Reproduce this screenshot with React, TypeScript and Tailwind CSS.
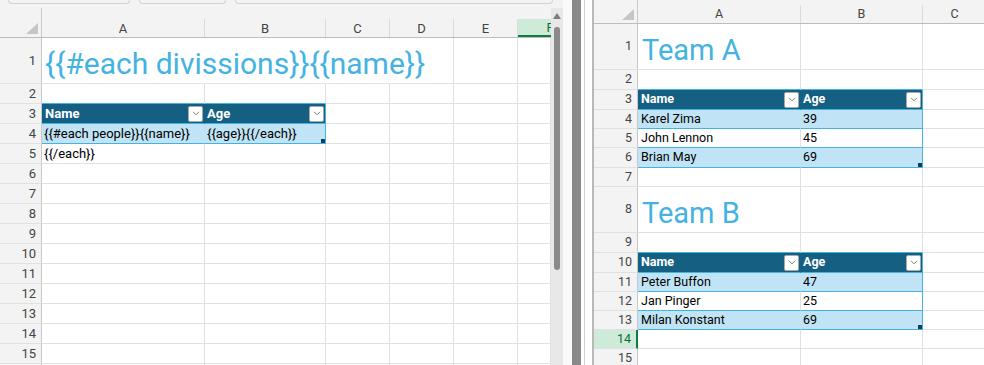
import React from "react";

// Two Excel windows side by side: the template on the left, the rendered result on the right.

type CellProps = {
  w: string;
  r?: string;
  b?: string;
  className?: string;
  children?: React.ReactNode;
};

function Cell({ w, r = "border-r-[#e1e1e1]", b = "border-b-[#e1e1e1]", className = "", children }: CellProps) {
  return (
    <div className={`${w} ${r} ${b} shrink-0 border-r border-b flex items-center whitespace-nowrap ${className}`}>
      {children}
    </div>
  );
}

function RowHead({ n, w, active = false }: { n: number; w: string; active?: boolean }) {
  const look = active
    ? "bg-[#cdebd8] text-[#0e6b38] border-r-2 border-r-[#107c41]"
    : "bg-[#f3f3f3] text-[#444] border-r border-r-[#c8c8c8]";
  return (
    <div className={`${w} ${look} shrink-0 border-b border-b-[#e1e1e1] flex items-center justify-end pr-[5px]`}>
      {n}
    </div>
  );
}

function Filter() {
  return (
    <div className="ml-auto mr-[1px] w-[15px] h-[16px] bg-white border border-[#a9a9a9] rounded-[2px] flex items-center justify-center">
      <svg width="8" height="5" viewBox="0 0 8 5">
        <path d="M1 0.8l3 3 3-3" fill="none" stroke="#7a7a7a" strokeWidth="1" />
      </svg>
    </div>
  );
}

function Corner() {
  return (
    <svg width="12" height="11" viewBox="0 0 12 11" className="absolute right-[3px] bottom-[3px]">
      <polygon points="12,0 12,11 0,11" fill="#c6c6c6" />
    </svg>
  );
}

function Handle() {
  return <div className="absolute right-0 bottom-0 w-[4px] h-[4px] bg-[#123f5e]" />;
}

const L = ["w-[163px]", "w-[121px]", "w-[64px]", "w-[64px]", "w-[64px]", "w-[33px]"];
const R = ["w-[163px]", "w-[122px]", "w-[64px]"];

const BLUE_R = "border-r-[#44b3e1]";
const BLUE_B = "border-b-[#44b3e1]";

function LeftPane() {
  const plain = (from: number) => L.slice(from).map((w, i) => <Cell key={i} w={w} />);

  return (
    <div className="w-[563px] shrink-0 flex flex-col bg-[#f3f3f3]">
      {/* ribbon buttons cut off at the top */}
      <div className="h-[8px] shrink-0 flex gap-[9px] pl-[8px]">
        <div className="w-[122px] h-[4px] border-x border-b border-[#d2d2d2] rounded-b-[4px]" />
        <div className="w-[87px] h-[4px] border-x border-b border-[#d2d2d2] rounded-b-[4px]" />
        <div className="w-[318px] h-[4px] border-x border-b border-[#d2d2d2] rounded-b-[4px]" />
      </div>

      <div className="flex flex-1 min-h-0 overflow-hidden">
        <div className="w-[551px] shrink-0 overflow-hidden bg-white text-[13px] text-black">
          {/* column headers */}
          <div className="flex h-[30px] bg-[#f3f3f3] border-b border-[#bdbdbd] text-[13px] text-[#444]">
            <div className="w-[42px] shrink-0 border-r border-[#c8c8c8] relative">
              <Corner />
            </div>
            {["A", "B", "C", "D", "E"].map((c, i) => (
              <div key={c} className={`${L[i]} shrink-0 mt-[11px] pt-[2px] border-r border-[#dadada] flex items-center justify-center`}>
                {c}
              </div>
            ))}
            <div className="w-[33px] shrink-0 mt-[11px] overflow-hidden bg-[#cdebd8] border-b-2 border-[#107c41] text-[#0e6b38]">
              <div className="w-[64px] h-full pt-[2px] flex items-center justify-center">F</div>
            </div>
          </div>

          {/* row 1 with the overflowing title */}
          <div className="flex h-[46px]">
            <RowHead n={1} w="w-[42px]" />
            <Cell w={L[0]} r="border-r-transparent" className="items-end pl-[3px] pb-[4px] relative z-10">
              <span className="text-[30px] leading-none text-[#44b3e1]">{"{{#each divissions}}{{name}}"}</span>
            </Cell>
            <Cell w={L[1]} r="border-r-transparent" />
            <Cell w={L[2]} r="border-r-transparent" />
            {plain(3)}
          </div>

          <div className="flex h-[20px]">
            <RowHead n={2} w="w-[42px]" />
            <Cell w={L[0]} b={BLUE_B} />
            <Cell w={L[1]} b={BLUE_B} />
            {plain(2)}
          </div>

          <div className="flex h-[20px]">
            <RowHead n={3} w="w-[42px]" />
            <Cell w={L[0]} r="border-r-[#156082]" b={BLUE_B} className="bg-[#156082] text-white font-bold pl-[3px]">
              Name
              <Filter />
            </Cell>
            <Cell w={L[1]} r={BLUE_R} b={BLUE_B} className="bg-[#156082] text-white font-bold pl-[2px]">
              Age
              <Filter />
            </Cell>
            {plain(2)}
          </div>

          <div className="flex h-[20px]">
            <RowHead n={4} w="w-[42px]" />
            <Cell w={L[0]} r="border-r-[#c0e4f5]" b={BLUE_B} className="bg-[#c0e4f5] pl-[2px]">
              {"{{#each people}}{{name}}"}
            </Cell>
            <Cell w={L[1]} r={BLUE_R} b={BLUE_B} className="bg-[#c0e4f5] pl-[2px] relative">
              {"{{age}}{{/each}}"}
              <Handle />
            </Cell>
            {plain(2)}
          </div>

          <div className="flex h-[20px]">
            <RowHead n={5} w="w-[42px]" />
            <Cell w={L[0]} className="pl-[2px]">
              {"{{/each}}"}
            </Cell>
            {plain(1)}
          </div>

          {[6, 7, 8, 9, 10, 11, 12, 13, 14, 15, 16].map((n) => (
            <div key={n} className="flex h-[20px]">
              <RowHead n={n} w="w-[42px]" />
              {plain(0)}
            </div>
          ))}
        </div>

        {/* vertical scrollbar */}
        <div className="w-[12px] shrink-0 bg-[#e8e8e8] flex flex-col items-center">
          <svg width="8" height="6" viewBox="0 0 8 6" className="mt-[5px] shrink-0">
            <polygon points="4,0 8,6 0,6" fill="#7d7d7d" />
          </svg>
          <div className="mt-[8px] w-[6px] h-[243px] shrink-0 rounded-full bg-[#8a8a8a]" />
        </div>
      </div>
    </div>
  );
}

type Person = { name: string; age: number };

function TeamRows({ start, people }: { start: number; people: Person[] }) {
  const heights = ["h-[19px]", "h-[19px]", "h-[20px]"];
  return (
    <>
      <div className="flex h-[20px]">
        <RowHead n={start} w="w-[44px]" />
        <Cell w={R[0]} r="border-r-[#156082]" b={BLUE_B} className="bg-[#156082] text-white font-bold pl-[3px]">
          Name
          <Filter />
        </Cell>
        <Cell w={R[1]} r={BLUE_R} b={BLUE_B} className="bg-[#156082] text-white font-bold pl-[2px]">
          Age
          <Filter />
        </Cell>
        <Cell w={R[2]} />
      </div>
      {people.map((p, i) => {
        const band = i % 2 === 0;
        const last = i === people.length - 1;
        return (
          <div key={p.name} className={`flex ${start === 3 ? heights[i] : "h-[19px]"}`}>
            <RowHead n={start + 1 + i} w="w-[44px]" />
            <Cell
              w={R[0]}
              r={band ? "border-r-[#c0e4f5]" : "border-r-[#e1e1e1]"}
              b={BLUE_B}
              className={`${band ? "bg-[#c0e4f5]" : ""} pl-[3px]`}
            >
              {p.name}
            </Cell>
            <Cell w={R[1]} r={BLUE_R} b={BLUE_B} className={`${band ? "bg-[#c0e4f5]" : ""} pl-[2px] relative`}>
              {p.age}
              {last && <Handle />}
            </Cell>
            <Cell w={R[2]} />
          </div>
        );
      })}
    </>
  );
}

function Title({ n, text }: { n: number; text: string }) {
  return (
    <div className="flex h-[46px]">
      <RowHead n={n} w="w-[44px]" />
      <Cell w={R[0]} className="items-end pl-[4px] pb-[4px]">
        <span className="text-[29px] leading-none text-[#44b3e1]">{text}</span>
      </Cell>
      <Cell w={R[1]} />
      <Cell w={R[2]} />
    </div>
  );
}

function Empty({ n, h, b, active }: { n: number; h: string; b?: string; active?: boolean }) {
  return (
    <div className={`flex ${h}`}>
      <RowHead n={n} w="w-[44px]" active={active} />
      <Cell w={R[0]} b={b} />
      <Cell w={R[1]} b={b} />
      <Cell w={R[2]} />
    </div>
  );
}

function RightPane() {
  return (
    <div className="flex-1 overflow-hidden bg-white border-l-2 border-[#b9b9b9] text-[12.5px] text-black">
      <div className="flex h-[24px] bg-[#f3f3f3] border-b border-[#bdbdbd] text-[12.5px] text-[#444]">
        <div className="w-[44px] shrink-0 border-r border-[#c8c8c8] relative">
          <Corner />
        </div>
        {["A", "B", "C"].map((c, i) => (
          <div key={c} className={`${R[i]} shrink-0 mt-[5px] border-r border-[#dadada] flex items-center justify-center`}>
            {c}
          </div>
        ))}
      </div>

      <Title n={1} text="Team A" />
      <Empty n={2} h="h-[20px]" b={BLUE_B} />
      <TeamRows
        start={3}
        people={[
          { name: "Karel Zima", age: 39 },
          { name: "John Lennon", age: 45 },
          { name: "Brian May", age: 69 },
        ]}
      />
      <Empty n={7} h="h-[19px]" />
      <Title n={8} text="Team B" />
      <Empty n={9} h="h-[20px]" b={BLUE_B} />
      <TeamRows
        start={10}
        people={[
          { name: "Peter Buffon", age: 47 },
          { name: "Jan Pinger", age: 25 },
          { name: "Milan Konstant", age: 69 },
        ]}
      />
      <Empty n={14} h="h-[19px]" active />
      <Empty n={15} h="h-[19px]" />
      <Empty n={16} h="h-[19px]" />
    </div>
  );
}

export default function App() {
  return (
    <div className="w-[984px] h-[365px] overflow-hidden flex bg-white" style={{ fontFamily: "Roboto, 'Liberation Sans', sans-serif" }}>
      <LeftPane />
      {/* gap between the two windows */}
      <div className="w-[9px] shrink-0 bg-[#fafafa]" />
      <div className="w-[9px] shrink-0 bg-[#8a8a8a]" />
      <div className="w-[3px] shrink-0 bg-white" />
      <div className="w-[1px] shrink-0 bg-[#d0d0d0]" />
      <div className="w-[7px] shrink-0 bg-white" />
      <RightPane />
    </div>
  );
}
